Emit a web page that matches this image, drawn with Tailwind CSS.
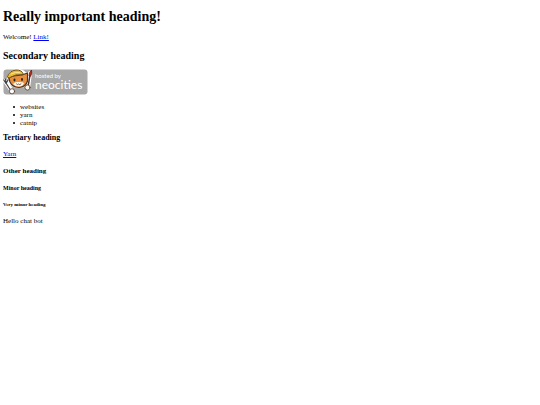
<!DOCTYPE html>
<html lang="en">
<head>
    <meta charset="UTF-8">
    <meta name="viewport" content="width=device-width, initial-scale=1.0">
    <title>Really important heading!</title>
    <script src="https://cdn.jsdelivr.net/npm/@tailwindcss/browser@4"></script>
</head>
<body class="bg-white px-[3px] py-[9px] font-['Liberation_Serif',serif] text-[7px] leading-[8px] text-black">
    <h1 class="text-[14px] leading-4 font-bold">Really important heading!</h1>
    <p class="mt-2">Welcome! <a href="#" class="text-[#0000ee] underline">Link!</a></p>
    <h2 class="mt-[9px] text-[10px] leading-3 font-bold">Secondary heading</h2>

    <a href="#" class="mt-[7px] block w-[85px]">
        <svg class="block w-full" viewBox="0 0 85 26" role="img" aria-label="hosted by neocities">
            <rect x="0.5" y="0.5" width="84" height="25" rx="3" fill="#a8a8a8"/>
            <!-- cat with helmet, fork and brush -->
            <g stroke-linecap="round" stroke-linejoin="round">
                <path d="M5 8 Q7 2 14 1 Q20 1 22 4 L25 5 L24 13 Q23 18 16 18 Q8 18 6 13 Z" fill="#fff" stroke="#fff" stroke-width="2"/>
                <path d="M2 12 L9 22 M27 4 L25 19" stroke="#fff" stroke-width="4"/>
                <path d="M7 13 L5.5 8 L10 7 L19 6 L24.5 4 L24.5 12 Q23 18 16 18.5 Q9 18 7 13 Z" fill="#e8903c" stroke="#4f3322" stroke-width="1.2"/>
                <path d="M10 15 Q12 12.5 15 13 Q19 12.5 21 14 Q20 17.5 16 17.5 Q12 17.5 10 15Z" fill="#fff5e6"/>
                <path d="M4.5 7.5 Q6 2 13 1 Q19 0.8 20.5 5.5 Q13 4.5 6 9 Z" fill="#e6bb35" stroke="#6e4e1c" stroke-width="1"/>
                <path d="M8 5 Q12 2.5 17 3.5" fill="none" stroke="#fbe48a" stroke-width="1"/>
                <ellipse cx="11.5" cy="11" rx="1" ry="1.4" fill="#24201e"/>
                <ellipse cx="19" cy="10.5" rx="1" ry="1.4" fill="#24201e"/>
                <path d="M13.5 15 Q14.5 16.3 15.5 15 Q16.5 16.3 18 15" fill="none" stroke="#5d3427" stroke-width="0.8"/>
                <path d="M3 14 L8 22 M0.8 11 L3 14.5 L5 11 M2.5 10 L3 14" fill="none" stroke="#444" stroke-width="1.2"/>
                <path d="M27 6 L25 18" stroke="#4a302a" stroke-width="1.5"/>
                <path d="M26 6.5 Q26 3 28.5 1 Q29.5 4 27.8 7Z" fill="#b42b22" stroke="#5f1a17" stroke-width="0.8"/>
                <circle cx="9" cy="22.3" r="2.6" fill="#fff" stroke="#5d4534" stroke-width="0.9"/>
                <circle cx="24.5" cy="18.5" r="2.6" fill="#fff8e9" stroke="#5d4534" stroke-width="0.9"/>
            </g>
            <text x="32" y="9" class="fill-white font-['Lato',sans-serif] text-[6px]">hosted by</text>
            <text x="32" y="20" class="fill-white font-['Lato',sans-serif] text-[12px]">neocities</text>
        </svg>
    </a>

    <ul class="mt-2 pl-[9px]">
        <li class="flex items-center gap-1 before:size-[2px] before:rounded-full before:bg-black before:mx-px before:content-['']">websites</li>
        <li class="flex items-center gap-1 before:size-[2px] before:rounded-full before:bg-black before:mx-px before:content-['']">yarn</li>
        <li class="flex items-center gap-1 before:size-[2px] before:rounded-full before:bg-black before:mx-px before:content-['']">catnip</li>
    </ul>
    <h3 class="mt-[6px] text-[8px] leading-[10px] font-bold">Tertiary heading</h3>
    <p class="mt-[7px]"><a href="#" class="text-[#0000ee] underline">Yarn</a></p>
    <h4 class="mt-[9px] text-[7px] leading-[8px] font-bold">Other heading</h4>
    <h5 class="mt-[9px] text-[6px] leading-[8px] font-bold">Minor heading</h5>
    <h6 class="mt-[9px] text-[5px] leading-[8px] font-bold">Very minor heading</h6>
    <p class="mt-2">Hello chat bot</p>
</body>
</html>
